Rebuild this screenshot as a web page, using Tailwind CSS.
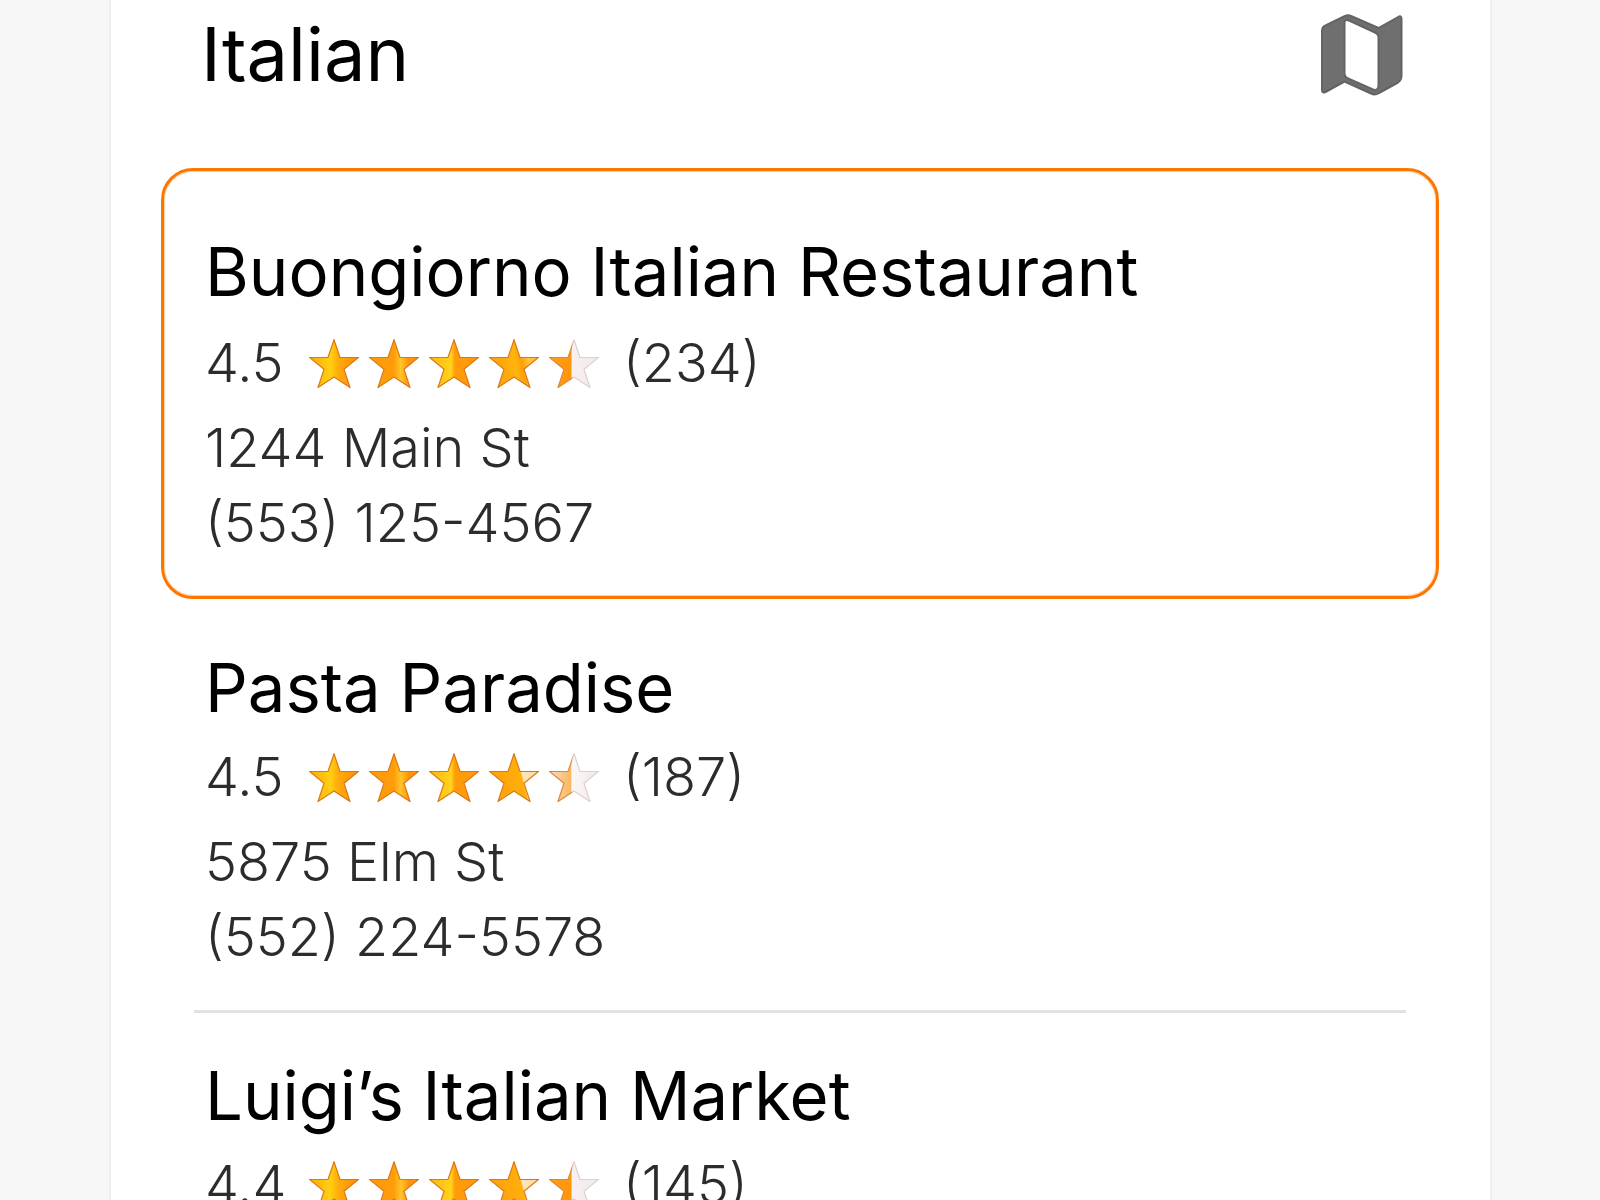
<!DOCTYPE html>
<html lang="en">
<head>
  <meta charset="UTF-8">
  <meta name="viewport" content="width=device-width, initial-scale=1.0">
  <title>Italian</title>
  <script src="https://cdn.jsdelivr.net/npm/@tailwindcss/browser@4"></script>
</head>
<body class="bg-[#f7f7f7] font-['Inter',sans-serif] overflow-x-hidden">
  <!-- star shape and its fills -->
  <svg class="absolute w-0 h-0" aria-hidden="true">
    <defs>
      <linearGradient id="gold">
        <stop offset="0.1" stop-color="#ffb00c"/><stop offset="0.42" stop-color="#ffd012"/><stop offset="0.6" stop-color="#ffaa0a"/><stop offset="1" stop-color="#ff8c08"/>
      </linearGradient>
      <linearGradient id="amber">
        <stop offset="0" stop-color="#ff9a0c"/><stop offset="0.5" stop-color="#ff9d08"/><stop offset="0.64" stop-color="#ffc62c"/><stop offset="0.8" stop-color="#ff930a"/>
      </linearGradient>
      <linearGradient id="split">
        <stop offset="0" stop-color="#ffb50e"/><stop offset="0.44" stop-color="#ffd31c"/><stop offset="0.52" stop-color="#ff9c08"/><stop offset="1" stop-color="#ff9a10"/>
      </linearGradient>
      <linearGradient id="shine" x2="1" y2="-0.15">
        <stop offset="0.1" stop-color="#ffa40a"/><stop offset="0.45" stop-color="#ffb40c"/><stop offset="0.58" stop-color="#ff9d0a"/><stop offset="0.72" stop-color="#ffc63c"/><stop offset="1" stop-color="#ffb42c"/>
      </linearGradient>
      <linearGradient id="fade" x2="1" y2="-0.25">
        <stop offset="0.1" stop-color="#ffa40a"/><stop offset="0.5" stop-color="#ffb00c"/><stop offset="0.53" stop-color="#ffe6bd"/><stop offset="1" stop-color="#fbcf8e"/>
      </linearGradient>
      <linearGradient id="half">
        <stop offset="0" stop-color="#ffa01c"/><stop offset="0.44" stop-color="#ff960a"/><stop offset="0.46" stop-color="#f8f1f1"/><stop offset="1" stop-color="#f2e9e8"/>
      </linearGradient>
      <linearGradient id="pale">
        <stop offset="0" stop-color="#f6dcc4"/><stop offset="0.43" stop-color="#fbb863"/><stop offset="0.46" stop-color="#fbf7f7"/><stop offset="1" stop-color="#f3e8e6"/>
      </linearGradient>
      <linearGradient id="edge">
        <stop offset="0" stop-color="#dc7c16"/><stop offset="1" stop-color="#dc7412"/>
      </linearGradient>
      <linearGradient id="edge-half">
        <stop offset="0" stop-color="#dc8430"/><stop offset="0.45" stop-color="#e08c38"/><stop offset="0.48" stop-color="#ddd0d2"/>
      </linearGradient>
      <path id="star" stroke-width="1.2" d="M25 0.800 31 18.500H49.500L35 30.200 41 48.500 25 38 9 48.500 15 30.200 0.500 18.500H19Z"/>
    </defs>
  </svg>

  <main class="ml-[109px] mr-[108px] border-x-2 border-[#efefef] bg-white pl-[50px] pr-[51px]">
    <header class="flex h-[168px] items-start justify-between pt-[6px] pl-[40px] pr-8">
      <h1 class="text-[74px] leading-[96px] font-normal text-black">Italian</h1>
      <button type="button" aria-label="Map" class="mt-[5px]">
        <svg class="w-[90px] h-[90px]" viewBox="0 0 90 90">
          <path fill="#6f6f6f" stroke="#646464" stroke-width="2" stroke-linejoin="round" fill-rule="evenodd" d="M5 20Q5 16 8.500 14.500L28 5Q31 3.500 34 5L61.500 17 82 5.500Q84.500 4.500 84.500 8V65Q84.500 69 81 71.500L62 82Q58 84.500 54 82.500L27.500 70.500 8.500 81Q5 82.500 5 79ZM27.500 12Q27.500 7.500 32 9.500L58 21.500Q61.500 23 61.500 26V74Q61.500 80.500 56 78.500L31 67.500Q27.500 66 27.500 62Z"/>
        </svg>
      </button>
    </header>

    <ul>
      <li class="rounded-[32px] border-3 border-[#fd7600] shadow-[inset_0_0_0_1px_rgba(255,140,40,0.4)] pt-[59px] pb-[36px] pl-[41px]">
        <h2 class="mb-0.5 text-[67px] leading-[84px] font-normal text-black">Buongiorno Italian Restaurant</h2>
        <div class="flex items-center text-[54px] leading-[94px] font-[350] text-[#2c2c2e]">
          <span class="w-[104px]">4.5</span>
          <div class="flex gap-[10px]" role="img" aria-label="4.5 out of 5 stars">
            <svg class="w-[50px] h-[49px]"><use href="#star" fill="url(#gold)" stroke="url(#edge)"/></svg>
            <svg class="w-[50px] h-[49px]"><use href="#star" fill="url(#amber)" stroke="url(#edge)"/></svg>
            <svg class="w-[50px] h-[49px]"><use href="#star" fill="url(#split)" stroke="url(#edge)"/></svg>
            <svg class="w-[50px] h-[49px]"><use href="#star" fill="url(#shine)" stroke="url(#edge)"/></svg>
            <svg class="w-[50px] h-[49px]"><use href="#star" fill="url(#half)" stroke="url(#edge-half)"/></svg>
          </div>
          <span class="ml-6">(234)</span>
        </div>
        <p class="text-[54px] leading-[75px] font-[350] text-[#2c2c2e]">1244 Main St</p>
        <p class="text-[54px] leading-[75px] font-[350] text-[#2c2c2e]">(553) 125-4567</p>
      </li>

      <li class="mx-[33px] border-b-3 border-[#e2e1e6] pt-[47px] pb-[36px] pl-[11px]">
        <h2 class="text-[67px] leading-[84px] font-normal text-black">Pasta Paradise</h2>
        <div class="flex items-center text-[54px] leading-[94px] font-[350] text-[#2c2c2e]">
          <span class="w-[104px]">4.5</span>
          <div class="flex gap-[10px]" role="img" aria-label="4.5 out of 5 stars">
            <svg class="w-[50px] h-[49px]"><use href="#star" fill="url(#gold)" stroke="url(#edge)"/></svg>
            <svg class="w-[50px] h-[49px]"><use href="#star" fill="url(#amber)" stroke="url(#edge)"/></svg>
            <svg class="w-[50px] h-[49px]"><use href="#star" fill="url(#split)" stroke="url(#edge)"/></svg>
            <svg class="w-[50px] h-[49px]"><use href="#star" fill="url(#fade)" stroke="url(#edge)"/></svg>
            <svg class="w-[50px] h-[49px]"><use href="#star" fill="url(#pale)" stroke="url(#edge-half)"/></svg>
          </div>
          <span class="ml-6">(187)</span>
        </div>
        <p class="text-[54px] leading-[75px] font-[350] text-[#2c2c2e]">5875 Elm St</p>
        <p class="text-[54px] leading-[75px] font-[350] text-[#2c2c2e]">(552) 224-5578</p>
      </li>

      <li class="mx-[33px] pt-[41px] pl-[11px]">
        <h2 class="text-[67px] leading-[84px] font-normal text-black">Luigi’s Italian Market</h2>
        <div class="flex items-center text-[54px] leading-[94px] font-[350] text-[#2c2c2e]">
          <span class="w-[104px]">4.4</span>
          <div class="flex gap-[10px]" role="img" aria-label="4.4 out of 5 stars">
            <svg class="w-[50px] h-[49px]"><use href="#star" fill="url(#gold)" stroke="url(#edge)"/></svg>
            <svg class="w-[50px] h-[49px]"><use href="#star" fill="url(#amber)" stroke="url(#edge)"/></svg>
            <svg class="w-[50px] h-[49px]"><use href="#star" fill="url(#split)" stroke="url(#edge)"/></svg>
            <svg class="w-[50px] h-[49px]"><use href="#star" fill="url(#fade)" stroke="url(#edge)"/></svg>
            <svg class="w-[50px] h-[49px]"><use href="#star" fill="url(#half)" stroke="url(#edge-half)"/></svg>
          </div>
          <span class="ml-6">(145)</span>
        </div>
      </li>
    </ul>
  </main>
</body>
</html>
